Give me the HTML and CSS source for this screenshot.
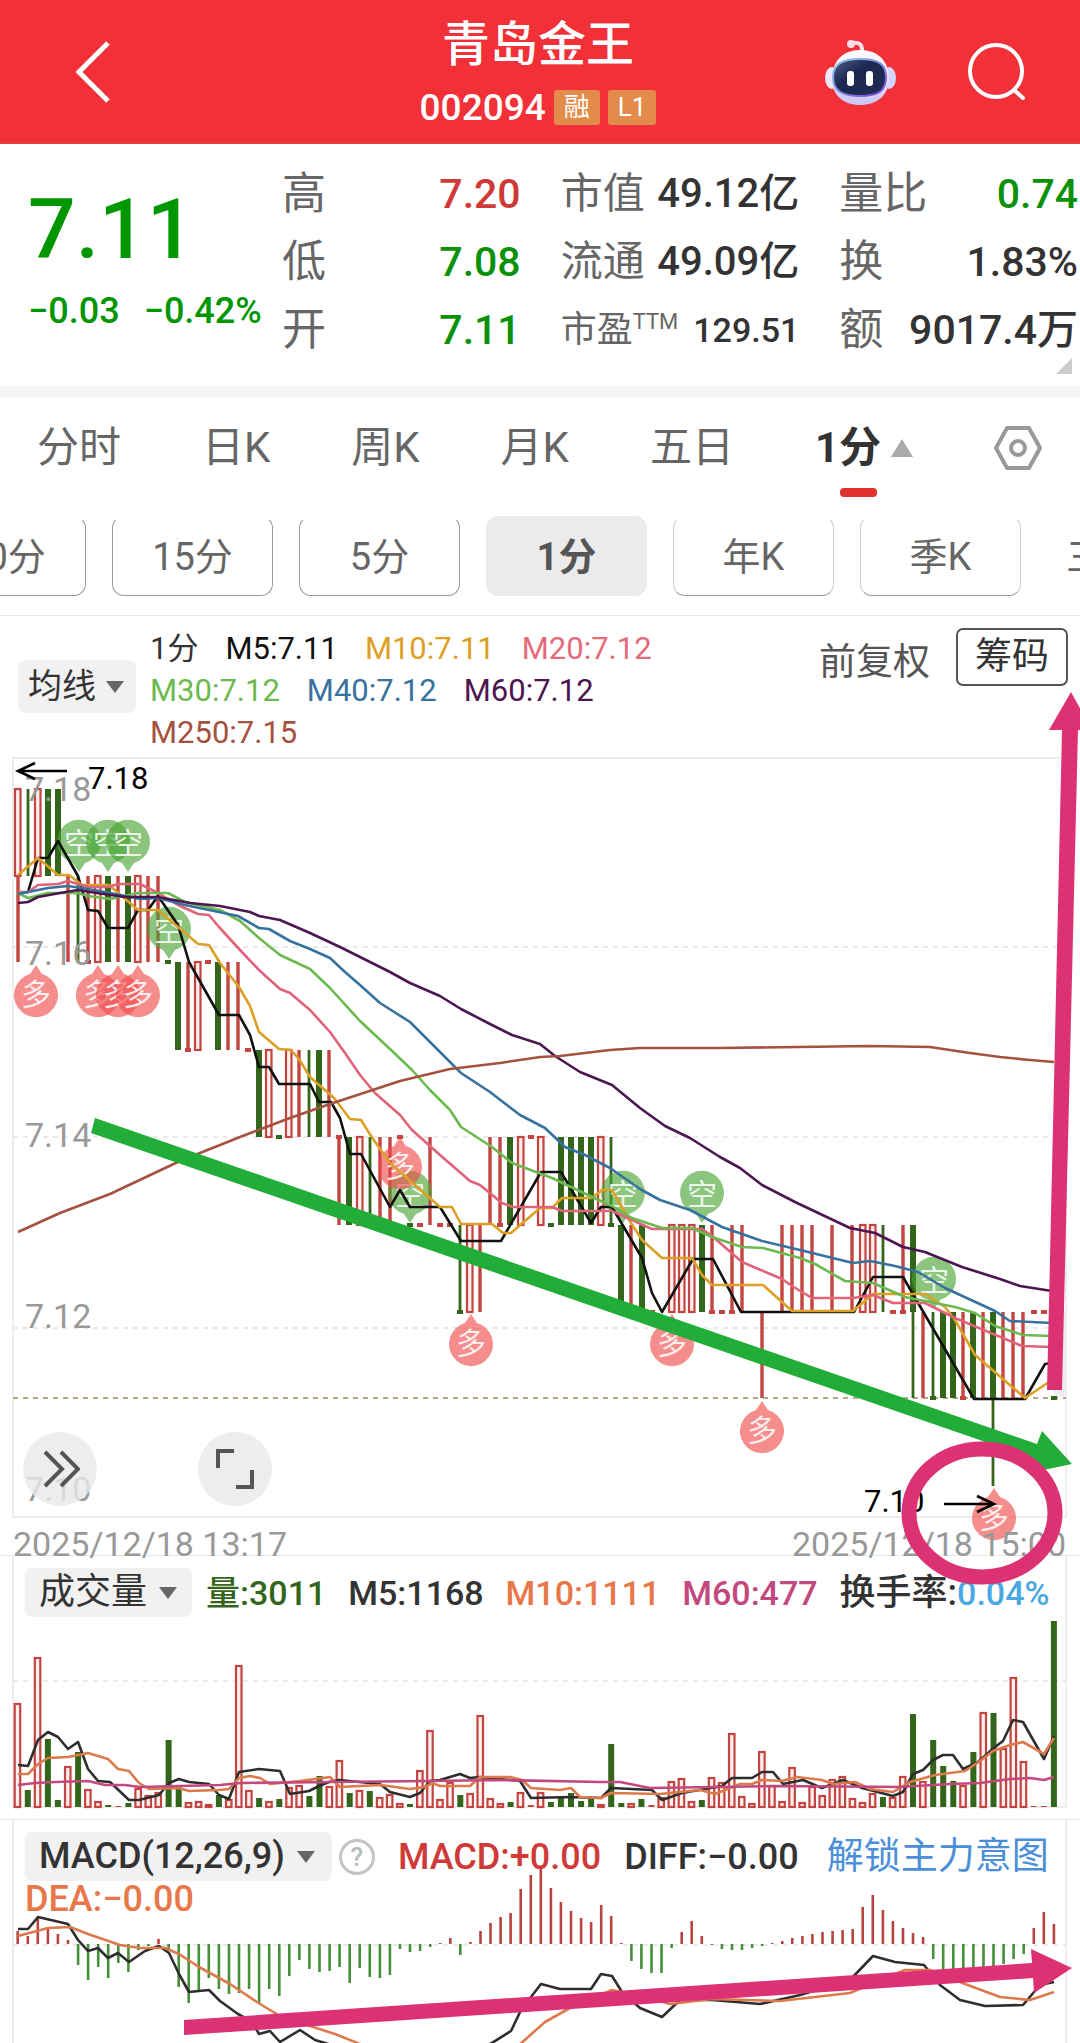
FILE: index.html
```html
<!DOCTYPE html>
<html lang="zh-CN">
<head>
<meta charset="utf-8">
<meta name="viewport" content="width=device-width, initial-scale=1">
<title>青岛金王 002094</title>
<link rel="stylesheet" href="styles.css">
</head>
<body>
<header class="topbar">
  <button class="icon-btn" aria-label="返回">
    <svg width="44" height="70" viewBox="0 0 44 70"><path d="M38 6 9 35l29 29" fill="none" stroke="#fff" stroke-width="5"/></svg>
  </button>
  <div class="stock">
    <h1>青岛金王</h1>
    <p class="code">002094 <span class="badge">融</span><span class="badge">L1</span></p>
  </div>
  <div class="tools">
    <button class="icon-btn" aria-label="智能助手">
      <svg width="72" height="68" viewBox="0 0 72 68">
        <defs>
          <linearGradient id="shell" x1="0" y1="0" x2="0" y2="1"><stop offset="0" stop-color="#fff"/><stop offset=".6" stop-color="#e4dcfa"/><stop offset="1" stop-color="#c9c4f2"/></linearGradient>
          <linearGradient id="visor" x1="0" y1="0" x2="1" y2="1"><stop offset="0" stop-color="#52618f"/><stop offset=".4" stop-color="#1c2850"/><stop offset="1" stop-color="#202b52"/></linearGradient>
          <linearGradient id="rim" x1="0" y1="0" x2="1" y2="1"><stop offset="0" stop-color="#8fd3e8"/><stop offset="1" stop-color="#7a3fd6"/></linearGradient>
        </defs>
        <path d="M28 5q11-2 10 9" fill="none" stroke="#fbdfe6" stroke-width="4"/><circle cx="27" cy="6" r="4" fill="#fbdfe6"/>
        <ellipse cx="8" cy="40" rx="7" ry="11" fill="#eee6fb"/><ellipse cx="65" cy="40" rx="7" ry="11" fill="#d5d4fb"/>
        <path d="M36 12c18 0 29 11 29 29 0 16-12 26-29 26S8 57 8 41c0-18 11-29 28-29z" fill="url(#shell)"/>
        <path d="M36 21c18 0 26 5 26 18 0 14-8 19-26 19s-27-5-27-19c0-13 9-18 27-18z" fill="url(#visor)" stroke="url(#rim)" stroke-width="2"/>
        <rect x="23" y="33" width="7" height="15" rx="3" fill="#fff"/><rect x="42" y="33" width="7" height="15" rx="3" fill="#fff"/>
      </svg>
    </button>
    <button class="icon-btn" aria-label="搜索">
      <svg width="62" height="60" viewBox="0 0 62 60"><circle cx="30" cy="29" r="26" fill="none" stroke="#fff" stroke-width="4"/><path d="m48 48 9 8" stroke="#fff" stroke-width="4" stroke-linecap="round"/></svg>
    </button>
  </div>
</header>

<section class="quote">
  <div class="last">
    <p class="price">7.11</p>
    <p class="change"><span>−0.03</span><span>−0.42%</span></p>
  </div>
  <dl class="stats">
    <div><dt class="big">高</dt><dd class="big up">7.20</dd></div>
    <div><dt>市值</dt><dd>49.12亿</dd></div>
    <div><dt class="big">量比</dt><dd class="big down">0.74</dd></div>
    <div><dt class="big">低</dt><dd class="big down">7.08</dd></div>
    <div><dt>流通</dt><dd>49.09亿</dd></div>
    <div><dt class="big">换</dt><dd class="big">1.83%</dd></div>
    <div><dt class="big">开</dt><dd class="big down">7.11</dd></div>
    <div><dt class="small">市盈<sup>TTM</sup></dt><dd class="small">129.51</dd></div>
    <div><dt class="big">额</dt><dd class="big">9017.4万</dd></div>
  </dl>
  <i class="fold"></i>
</section>

<nav class="tabs">
  <button>分时</button><button>日K</button><button>周K</button><button>月K</button><button>五日</button>
  <button class="on">1分<i class="tri up-tri"></i></button>
  <button aria-label="设置"><svg width="48" height="46" viewBox="0 0 48 46"><path d="M13 3h22l11 20-11 20H13L2 23z" fill="none" stroke="#999" stroke-width="4" stroke-linejoin="round"/><circle cx="24" cy="23" r="7" fill="none" stroke="#999" stroke-width="4"/></svg></button>
</nav>
<nav class="periods">
  <button>30分</button><button>15分</button><button>5分</button><button class="on">1分</button><button class="faded">年K</button><button class="faded">季K</button><button class="bare">三日</button>
</nav>

<main class="charts">
  <section class="legend">
    <button class="pill">均线<i class="tri"></i></button>
    <p class="averages"><span class="c-text">1分</span><span class="c-m5">M5:7.11</span><span class="c-m10">M10:7.11</span><span class="c-m20">M20:7.12</span><span class="c-m30">M30:7.12</span><span class="c-m40">M40:7.12</span><span class="c-m60">M60:7.12</span><span class="c-m250">M250:7.15</span></p>
    <button class="plain">前复权</button>
    <button class="outlined">筹码</button>
  </section>

  <section class="stack">
    <svg class="plot" id="price" viewBox="0 757 1080 761" role="img" aria-label="1分K线"></svg>
    <div class="float-tools">
      <button class="round" aria-label="快进"><svg width="40" height="40" viewBox="0 0 40 40"><path d="m5 3 17 17L5 37M21 3l17 17-17 17" fill="none" stroke="#555" stroke-width="4"/></svg></button>
      <button class="round" aria-label="全屏"><svg width="40" height="40" viewBox="0 0 40 40"><path d="M19 2H3v17M37 21v17H21" fill="none" stroke="#555" stroke-width="4"/></svg></button>
    </div>
  </section>
  <div class="dates"><time>2025/12/18 13:17</time><time>2025/12/18 15:00</time></div>

  <section class="stack ruled">
    <svg class="plot" id="volume" viewBox="0 1556 1080 263" role="img" aria-label="成交量"></svg>
    <div class="readout">
      <button class="pill">成交量<i class="tri"></i></button>
      <span class="c-vol">量:3011</span><span class="c-text">M5:1168</span><span class="c-orange">M10:1111</span><span class="c-magenta">M60:477</span><span class="c-text turn">换手率:<span class="c-sky">0.04%</span></span>
    </div>
  </section>

  <section class="stack ruled">
    <svg class="plot" id="macd" viewBox="0 1820 1080 223" role="img" aria-label="MACD"></svg>
    <div class="readout macd">
      <button class="pill">MACD(12,26,9)<i class="tri"></i></button>
      <button class="help" aria-label="说明">?</button>
      <span class="c-red">MACD:+0.00</span><span class="c-text">DIFF:−0.00</span><a href="#macd">解锁主力意图</a><span class="c-orange">DEA:−0.00</span>
    </div>
  </section>

  <svg class="notes" viewBox="0 616 1080 1427" aria-hidden="true">
    <g fill="#22ad38"><path d="M95 1118 1037 1444 1042 1431 1072 1464 1029 1473 1032 1458 91 1133z"/></g>
    <g fill="#dc3274">
      <path d="M1047 1390 1062 730H1049L1071 692 1092 730H1078L1062 1390z"/>
      <path d="M184 2020 1032 1963 1031 1949 1072 1968 1034 1993 1033 1978 184 2035z"/>
    </g>
    <ellipse cx="982" cy="1513" rx="73" ry="64" fill="none" stroke="#dc3274" stroke-width="15"/>
  </svg>
</main>
<script src="chart.js"></script>
</body>
</html>
```
FILE: styles.css
```css
* { box-sizing: border-box; margin: 0; padding: 0; }
body { background: #fff; color: #333; font-family: Roboto, "Noto Sans CJK SC", sans-serif; overflow-x: hidden; }
button { border: 0; background: none; color: inherit; font: inherit; white-space: nowrap; }
svg { display: block; }
i { display: block; }

.topbar { display: grid; grid-template-columns: 1fr auto 1fr; align-items: center; height: 144px; padding: 0 52px 0 48px; background: #f13038; color: #fff; border-bottom: 1px solid #d8464c; }
.topbar > .icon-btn { justify-self: start; margin-left: 22px; }
.stock { padding-top: 8px; text-align: center; }
.stock h1 { font-size: 48px; line-height: 64px; font-weight: 500; }
.code { display: flex; align-items: center; justify-content: center; gap: 8px; font-size: 37px; line-height: 62px; font-weight: 500; white-space: nowrap; }
.badge { padding: 0 10px; border-radius: 3px; background: #e38b4b; font-size: 26px; line-height: 35px; font-weight: 400; }
.tools { display: flex; justify-content: flex-end; align-items: center; gap: 70px; }

.quote { position: relative; display: flex; height: 242px; }
.last { width: 254px; flex: none; color: #009600; margin-left: 28px; padding-top: 31px; }
.price { font-size: 84px; line-height: 110px; font-weight: 500; }
.change { display: flex; gap: 24px; font-size: 36px; line-height: 52px; white-space: nowrap; font-weight: 500; }
.stats { flex: 1; display: grid; grid-template-columns: repeat(3, 1fr); grid-auto-rows: 68px; column-gap: 40px; padding: 16px 2px 0 0; }
.stats div { display: flex; justify-content: space-between; align-items: center; font-size: 40px; line-height: 60px; white-space: nowrap; min-width: 0; }
.stats dt { color: #666; font-size: 42px; }
dd { font-weight: 500; }
.stats dt.big { font-size: 44px; }
.stats dd.big { font-size: 41px; }
.stats dd.small { font-size: 34px; }
.stats dt.small { font-size: 36px; }
dt.small sup { font-size: 22px; line-height: 22px; }
.up { color: #cf3a38; }
.down { color: #0a910a; }
.fold { position: absolute; right: 8px; bottom: 12px; border: 8px solid transparent; border-right-color: #ccc; border-bottom-color: #ccc; }

.tabs { display: flex; justify-content: space-between; align-items: center; height: 130px; padding: 0 38px 17px 37px; border-top: 11px solid #f4f4f4; font-size: 42px; line-height: 60px; color: #666; }
.tabs .on { position: relative; display: flex; align-items: center; gap: 10px; color: #333; font-weight: 700; }
.tabs .on::after { content: ""; position: absolute; left: 25px; top: 70px; width: 37px; height: 9px; border-radius: 4px; background: #e1312f; }
.tri { border: 9px solid transparent; border-top: 12px solid #666; border-bottom: 0; }
.tri.up-tri { border: 11px solid transparent; border-bottom: 18px solid #aaa; border-top: 0; }

.periods { display: flex; gap: 26px; height: 100px; margin-left: -75px; overflow: hidden; border-bottom: 1px solid #e5e5e5; font-size: 38px; color: #666; }
.periods button { flex: 0 0 161px; height: 80px; padding-bottom: 5px; border: 1px solid #999; border-top-color: transparent; border-radius: 12px; }
.periods .on { background: #ebebeb; border-color: #ebebeb; font-weight: 700; color: #555; }
.periods .faded { border-left-color: #ccc; border-right-color: #ccc; }
.periods .bare { border-color: transparent; padding-left: 18px; text-align: left; }

.charts { position: relative; overflow: hidden; }
.legend { display: flex; align-items: flex-start; height: 141px; padding: 12px 12px 0 18px; }
.pill { display: flex; align-items: center; gap: 10px; padding: 0 12px 0 10px; border-radius: 7px; background: #f1f1f1; color: #333; font-size: 34px; line-height: 53px; }
.legend .pill { margin-top: 32px; }
.averages { display: flex; flex-wrap: wrap; column-gap: 27px; width: 560px; margin: 0 auto 0 14px; font-size: 31px; line-height: 42px; white-space: nowrap; }
.plain { font-size: 37px; line-height: 70px; color: #555; }
.outlined { margin-left: 26px; padding: 0 17px; border: 2px solid #555; border-radius: 7px; font-size: 37px; line-height: 54px; }

.stack { display: grid; }
.stack > * { grid-area: 1 / 1; }
.plot { width: 100%; height: auto; overflow: visible; }
.float-tools { align-self: end; z-index: 1; display: flex; gap: 101px; padding: 0 0 12px 23px; }
.round { display: grid; place-items: center; width: 74px; height: 74px; border-radius: 50%; background: rgba(232, 232, 232, .8); }
.dates { position: relative; display: flex; justify-content: space-between; height: 37px; padding: 6px 14px 0 13px; color: #999; font-size: 34px; line-height: 40px; }
.ruled { border-top: 1px solid #e8e8e8; }
.readout { align-self: start; z-index: 1; display: flex; flex-wrap: wrap; align-items: center; gap: 0 22px; padding: 12px 22px 0 25px; font-size: 34px; line-height: 48px; white-space: nowrap; font-weight: 500; }
.readout .pill { padding: 0 15px 0 14px; gap: 12px; font-size: 36px; line-height: 49px; margin-right: -8px; font-weight: 400; }
.macd { font-size: 36px; column-gap: 23px; line-height: 36px; }
.readout.macd .pill { margin-right: 0; padding-right: 17px; font-weight: 500; }
.macd a { margin-left: 5px; color: #4b8fd9; font-size: 37px; font-weight: 400; text-decoration: none; }
.help { width: 36px; height: 36px; margin-left: -16px; border: 3px solid #c4c4c4; border-radius: 50%; color: #bbb; font-size: 26px; line-height: 30px; }
.notes { position: absolute; inset: 0; z-index: 2; width: 100%; pointer-events: none; }

.c-text { color: #333; }
.c-m5 { color: #111; }
.c-m10 { color: #dca024; }
.c-m20 { color: #e56a7a; }
.c-m30 { color: #6cb94f; }
.c-m40 { color: #37729e; }
.c-m60 { color: #4c1650; }
.c-m250 { color: #a4513e; }
.c-vol { color: #33651a; }
.c-orange { color: #e8774a; }
.c-magenta { color: #c2487e; }
.c-sky { color: #49a8e4; }
.c-red { color: #cf3a38; }
.turn { font-size: 36px; }
.turn .c-sky { font-size: 34px; }

.line { fill: none; stroke-width: 2.6; stroke-linejoin: round; }
.frame { fill: none; stroke: #e8e8e8; stroke-width: 1.5; }
.dash { stroke: #e2e2e2; stroke-width: 1.5; stroke-dasharray: 5 5; }
.now { stroke: #b5a88a; stroke-width: 2; stroke-dasharray: 5 5; }
.axis { fill: #999; font-size: 34px; }
.mark { fill: #000; font-size: 31px; }
.pointer { fill: none; stroke: #000; stroke-width: 2.6; }
.sign text { fill: #fff; fill-opacity: .85; font-size: 30px; text-anchor: middle; }
```
FILE: chart.js
```javascript
const RED = '#c44442', GREEN = '#33651a';
const put = (id, html) => { document.getElementById(id).innerHTML += html; };
const line = (pts, color) => `<polyline class="line" stroke="${color}" points="${pts}"/>`;
const rule = (cls, y) => `<line class="${cls}" x1="13" x2="1066" y1="${y}" y2="${y}"/>`;
const bar = (x, w, y1, y2, color) => `<rect x="${x - w / 2}" y="${y1}" width="${w}" height="${y2 - y1}" fill="${color}"/>`;
const hollow = (x, y1, y2) => `<rect x="${x - 3}" y="${y1 + 1}" width="5.5" height="${Math.max(y2 - y1 - 2, 1)}" fill="#fff0ee" stroke="${RED}" stroke-width="2.2"/>`;

/* Candles: R hollow rise, G solid fall, r / g thin, t / u red and green flat ticks */
const levels = [789, 876, 962, 1050, 1137, 1225, 1312, 1398, 1486];
const candles = {
  0: 'R18 g28 R38 G48 G58',
  1: 'r18 r68 g78 r88 R98 G108 r118 G128 R138 r148 r158',
  2: 'G178 r188 R198 G218 r228 r238 u168 t208 t88',
  3: 'G259 R269 R289 r299 g309 G319 r329 t248 t188',
  4: 'r339 G349 R360 g370 r380 r390 r430 r490 r500 G510 R521 R541 G561 G571 G581 G591 R601 g611 t400 t531 u279 t339',
  5: 'g460 R470 r480 G621 r631 G642 R672 R682 R692 G702 r712 r732 r742 r782 r792 r802 r812 r832 r852 R863 R873 g883 r903 G913 u410 t420 t440 t450 t500 u551 u611',
  6: 'r762 g913 r923 g933 G943 G953 r963 G973 r983 G993 r1003 r1013 r1023 u460 t652 t712 t722 t732 t893 t903 t1034 t1044',
  7: 'g993 u933 t963 u1054'
};
let candleSvg = '';
for (const [level, list] of Object.entries(candles)) {
  const y = levels[level], end = levels[+level + 1];
  for (const item of list.split(' ')) {
    const x = +item.slice(1);
    candleSvg += {
      R: () => hollow(x, y - 1, end + 1),
      G: () => bar(x, 6, y, end, GREEN),
      r: () => bar(x, 3.4, y, end, RED),
      g: () => bar(x, 2.8, y, end, GREEN),
      t: () => bar(x, 6, y - 2, y + 2, RED),
      u: () => bar(x, 6, y - 2, y + 2, GREEN)
    }[item[0]]();
  }
}

const sign = (x, y, up) => `<g class="sign" transform="translate(${x} ${y})"><path d="${up
  ? 'M0-29l6 9A22 22 0 1 1-6-20z' : 'M0 29l-6-9A22 22 0 1 1 6 20z'}" fill="${up ? '#f04a4a' : '#48a332'}" fill-opacity=".63"/><text y="11">${up ? '多' : '空'}</text></g>`;

put('price',
  `<rect class="frame" x="13" y="758" width="1053" height="759"/><rect x="1054" y="1312" width="12" height="85" fill="#eee"/>` +
  rule('dash', 947) + rule('dash', 1137) + rule('dash', 1328) + rule('now', 1398) + candleSvg +
  [[79, 843], [108, 843], [128, 843], [169, 930], [410, 1194], [623, 1194], [702, 1194], [934, 1280]].map(p => sign(...p, false)).join('') +
  [[36, 994], [98, 994], [118, 994], [138, 994], [400, 1166], [471, 1343], [672, 1343], [762, 1430], [994, 1517]].map(p => sign(...p, true)).join('') +
  line('18,893 28,892 38,858 48,858 58,841 78,876 88,910 98,911 108,928 128,928 138,910 148,910 158,896 178,925 189,962 219,1015 239,1015 250,1035 259,1067 269,1067 279,1084 310,1084 319,1102 331,1102 340,1118 350,1154 361,1154 390,1207 400,1190 410,1207 440,1207 461,1241 501,1241 541,1172 561,1172 591,1223 601,1207 612,1207 642,1258 652,1293 662,1312 693,1259 713,1259 741,1312 854,1312 873,1277 903,1277 974,1399 1025,1399 1045,1364 1052,1363', '#111') +
  line('18,875 38,858 58,875 69,875 82,885 109,885 138,910 158,910 198,944 209,945 220,963 239,987 250,1006 259,1032 279,1049 291,1050 299,1059 310,1077 334,1098 350,1119 361,1120 371,1136 390,1163 440,1207 452,1207 461,1224 492,1224 503,1233 511,1233 540,1208 552,1208 562,1198 592,1198 602,1190 612,1190 631,1223 642,1240 662,1258 692,1258 702,1275 712,1285 763,1285 792,1311 853,1311 873,1294 925,1294 945,1307 955,1320 975,1355 1025,1398 1052,1380', '#dca024') +
  line('18,892 28,892 38,885 58,884 68,881 88,887 108,887 118,884 140,884 158,893 178,905 198,914 209,915 219,927 240,950 259,970 280,989 290,993 310,1010 330,1032 345,1053 360,1075 375,1093 400,1115 412,1130 440,1155 470,1181 480,1185 502,1203 513,1207 552,1207 562,1211 612,1211 632,1220 652,1229 702,1229 712,1236 742,1262 782,1279 792,1286 812,1298 853,1298 873,1295 893,1303 925,1303 955,1318 1022,1346 1052,1347', '#e0637a') +
  line('18,893 28,898 48,893 78,893 88,896 110,899 138,893 168,893 185,902 220,910 240,921 259,938 280,955 310,969 330,988 360,1021 390,1049 412,1070 430,1090 450,1110 461,1127 492,1147 512,1163 552,1178 592,1197 612,1206 632,1218 662,1228 692,1228 712,1237 742,1247 763,1248 800,1258 815,1264 845,1281 873,1283 905,1297 955,1307 975,1313 995,1326 1023,1335 1052,1336', '#6cb94f') +
  line('18,894 48,888 68,886 88,889 110,893 140,899 158,898 185,905 238,916 259,928 269,929 290,941 310,949 330,958 345,972 360,985 380,1003 410,1022 440,1052 461,1073 490,1092 520,1115 545,1128 565,1147 585,1155 610,1168 640,1189 660,1200 690,1210 722,1227 762,1241 800,1250 853,1263 870,1261 895,1266 918,1272 945,1288 995,1311 1010,1321 1052,1323', '#37729e') +
  line('18,903 28,902 38,897 60,893 78,890 90,892 125,897 158,897 190,903 220,906 250,912 259,916 280,920 310,933 340,947 360,957 390,972 410,983 440,996 461,1009 490,1024 512,1035 540,1044 555,1056 580,1072 612,1085 640,1108 665,1126 690,1138 720,1157 740,1168 762,1185 795,1202 850,1228 875,1233 903,1247 925,1252 962,1267 1000,1279 1020,1286 1052,1291', '#4c1650') +
  line('18,1232 60,1213 110,1194 180,1161 240,1137 290,1118 330,1104 400,1081 450,1069 500,1063 540,1057 560,1056 610,1050 640,1048 720,1048 870,1046 930,1047 970,1053 1000,1057 1030,1060 1054,1062', '#a4513e') +
  [['7.18', 801], ['7.16', 965], ['7.14', 1147], ['7.12', 1328], ['7.10', 1501]].map(([t, y]) => `<text class="axis" x="25" y="${y}">${t}</text>`).join('') +
  `<text class="mark" x="88" y="789">7.18</text><path class="pointer" d="M67 771H18M35 763 18 771l17 8"/>` +
  `<text class="mark" x="864" y="1512">7.10</text><path class="pointer" d="M944 1504h50M977 1496l17 8-17 8"/>`
);

/* Volume bars: R rise, G fall, value is the bar's top */
const volumes = 'R1703 G1790 R1657 G1739 G1800 R1766 G1752 R1789 R1801 G1805 R1806 G1803 R1788 R1795 R1792 G1740 G1787 R1802 R1801 R1804 G1795 R1799 R1665 R1790 G1798 R1801 G1799 R1787 R1785 G1796 G1776 R1786 R1760 G1793 R1790 G1791 R1797 R1794 R1803 G1804 R1770 R1730 R1799 R1782 G1795 R1793 R1715 R1798 R1803 G1802 R1792 R1805 R1792 G1802 G1798 G1793 G1801 G1799 R1804 G1744 G1803 R1803 G1799 R1805 R1797 R1781 R1778 R1801 G1800 R1777 R1782 R1733 R1796 R1803 R1751 R1785 R1801 R1767 R1802 R1786 R1795 R1779 R1776 R1798 R1802 R1793 G1797 R1797 R1776 G1714 R1781 G1740 G1766 G1781 R1785 G1752 R1712 G1713 R1748 R1677 R1761 R1806 R1806 G1621'.split(' ');
const slot = i => Math.round((17.7 + i * 10.06) * 10) / 10;
put('volume',
  '<path class="frame" d="M13 1556V1807H1066V1556"/>' + rule('dash', 1681) +
  volumes.map((v, i) => {
    const top = +v.slice(1);
    if (v[0] === 'G') return bar(slot(i), 6, top, 1807, GREEN);
    return top > 1804 ? bar(slot(i), 6, top, 1807, RED) : hollow(slot(i), top, 1808);
  }).join('') +
  line('18,1765 28,1766 38,1740 48,1732 58,1737 68,1749 78,1742 88,1769 98,1781 110,1782 129,1800 139,1800 159,1795 169,1783 179,1779 189,1782 209,1784 219,1795 229,1799 239,1772 259,1769 280,1771 290,1794 309,1791 319,1786 329,1782 339,1780 380,1784 390,1792 410,1797 420,1793 430,1781 440,1780 460,1774 470,1778 480,1777 520,1781 531,1798 571,1797 601,1798 611,1788 652,1790 662,1800 682,1793 722,1786 732,1778 752,1778 762,1772 773,1772 783,1784 803,1780 822,1788 843,1780 862,1788 893,1796 903,1792 913,1774 923,1770 933,1760 943,1755 953,1755 963,1769 978,1762 995,1747 1003,1741 1013,1720 1023,1722 1044,1759 1054,1736', '#2e2e2e') +
  line('18,1774 28,1774 38,1764 48,1758 68,1757 88,1753 108,1759 118,1769 129,1771 139,1783 149,1789 179,1788 189,1791 219,1790 229,1789 239,1778 250,1776 260,1778 270,1784 300,1781 330,1777 340,1787 380,1785 410,1789 425,1787 432,1783 440,1786 470,1786 480,1777 510,1777 522,1780 531,1788 560,1790 571,1788 580,1797 601,1798 611,1793 660,1794 700,1790 715,1794 730,1788 740,1784 752,1784 762,1780 782,1781 797,1777 822,1780 833,1784 855,1782 870,1789 893,1792 910,1782 935,1775 965,1771 980,1761 993,1751 1010,1745 1023,1742 1044,1754 1054,1738', '#dc7a4c') +
  line('18,1785 35,1783 55,1782 88,1781 105,1785 125,1785 140,1787 220,1785 240,1783 330,1782 430,1781 500,1780 600,1782 620,1782 650,1788 780,1786 900,1787 950,1784 980,1783 1010,1779 1030,1778 1044,1780 1054,1777', '#c2487e')
);

/* MACD histogram: far end of each bar, measured from the zero line at 1944 */
const histogram = [1931, 1936, 1918, 1927, 1934, 1940, 1965, 1980, 1967, 1978, 1963, 1972, 1950, 1946, 1939, 1950, 1987, 2003, 1990, 1978, 1989, 1994, 1993, 1989, 2003, 1989, 1996, 1976, 1960, 1969, 1972, 1971, 1967, 1983, 1968, 1977, 1978, 1975, 1949, 1952, 1951, 1947, 1943, 1938, 1955, 1942, 1931, 1923, 1917, 1913, 1889, 1875, 1869, 1888, 1902, 1911, 1918, 1922, 1905, 1916, 1943, 1961, 1969, 1973, 1973, 1948, 1932, 1921, 1936, 1945, 1949, 1950, 1950, 1948, 1946, 1943, 1941, 1938, 1936, 1934, 1932, 1931, 1930, 1929, 1907, 1895, 1910, 1921, 1928, 1933, 1937, 1959, 1970, 1970, 1970, 1970, 1970, 1970, 1964, 1959, 1954, 1928, 1912, 1924];
put('macd',
  '<path class="frame" d="M13 2050V1820M1066 1820V2050"/>' + rule('dash', 1945) +
  histogram.map((y, i) => bar(slot(i), 2.6, Math.min(y, 1944), Math.max(y, 1944), y < 1944 ? '#b84442' : '#459038')).join('') +
  line('18,1929 28,1929 38,1917 68,1924 78,1940 88,1951 98,1948 108,1958 118,1953 129,1962 145,1951 159,1946 169,1953 179,1974 189,1992 209,1990 220,2001 238,2014 252,2022 259,2034 270,2031 280,2042 300,2030 315,2040 335,2046 487,2046 511,2031 521,2010 541,1984 560,1989 591,1989 601,1974 612,1976 622,1992 640,2008 662,2017 680,2000 712,2000 760,2004 800,1995 850,1980 873,1956 895,1962 924,1965 940,1985 960,2000 985,2006 1023,2005 1040,1985 1054,1982', '#2e2e2e') +
  line('18,1936 48,1928 70,1927 88,1934 120,1945 140,1948 165,1948 179,1954 199,1967 230,1984 260,2004 280,2016 310,2026 335,2034 365,2046 518,2046 545,2022 570,2008 612,1990 640,1996 670,2004 712,1999 780,2001 850,1993 905,1970 930,1970 965,1984 1000,1997 1030,2000 1054,1992', '#dc7a4c')
);
```
